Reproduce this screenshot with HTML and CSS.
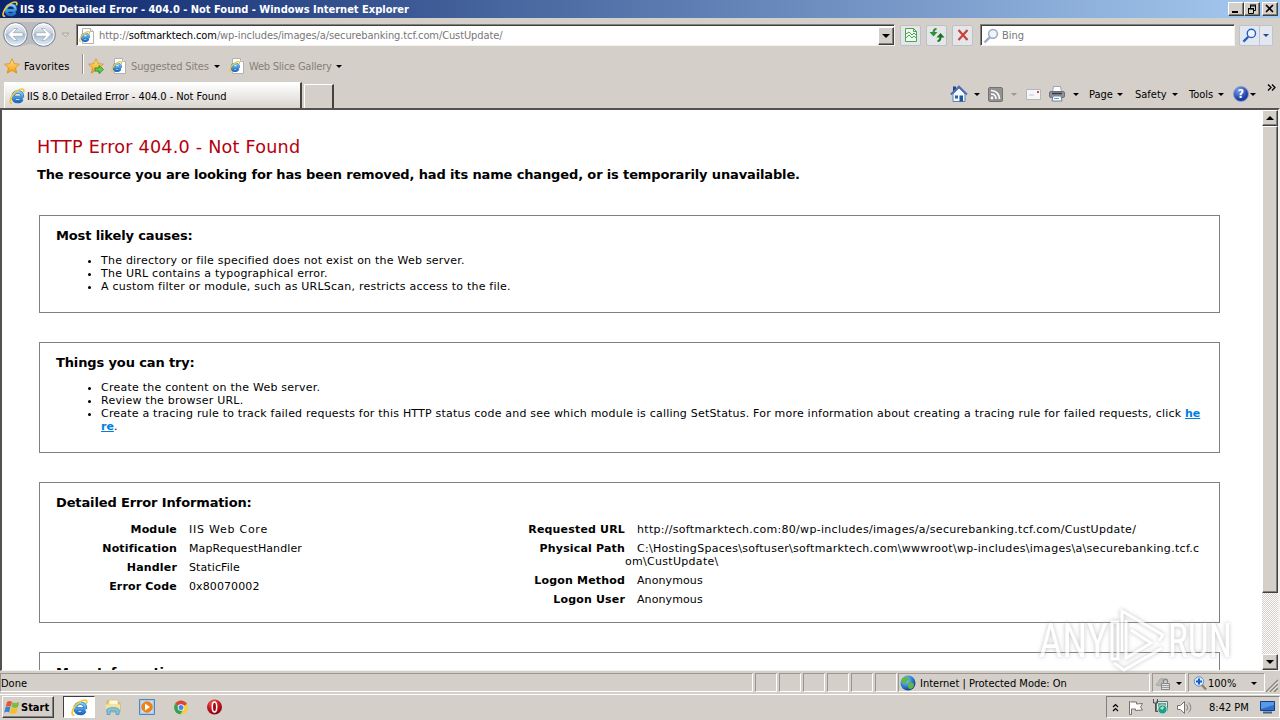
FILE: index.html
```html
<!DOCTYPE html>
<html lang="en">
<head>
    <meta charset="UTF-8">
    <title>IIS 8.0 Detailed Error - 404.0 - Not Found</title>
    <link rel="stylesheet" href="styles.css">
</head>
<body>
<!-- shared icons -->
<svg class="defs" width="0" height="0">
    <defs>
        <linearGradient id="ieBlue" x1="0" y1="0" x2="0" y2="1">
            <stop offset="0" stop-color="#7ccff8"/>
            <stop offset="1" stop-color="#1f6cc8"/>
        </linearGradient>
        <linearGradient id="navBlue" x1="0" y1="0" x2="0" y2="1">
            <stop offset="0" stop-color="#f4f7fb"/>
            <stop offset="0.45" stop-color="#c3cddb"/>
            <stop offset="0.5" stop-color="#a9bad0"/>
            <stop offset="1" stop-color="#e2f3fc"/>
        </linearGradient>
        <linearGradient id="starGold" x1="0" y1="0" x2="0" y2="1">
            <stop offset="0" stop-color="#ffe884"/>
            <stop offset="1" stop-color="#f59a10"/>
        </linearGradient>
        <radialGradient id="globeFill" cx="0.35" cy="0.3" r="0.8">
            <stop offset="0" stop-color="#8ed8ff"/>
            <stop offset="0.6" stop-color="#2676c8"/>
            <stop offset="1" stop-color="#0b2f78"/>
        </radialGradient>
        <radialGradient id="operaRed" cx="0.4" cy="0.25" r="0.8">
            <stop offset="0" stop-color="#f26a6a"/>
            <stop offset="0.5" stop-color="#c81820"/>
            <stop offset="1" stop-color="#7c0008"/>
        </radialGradient>
    </defs>
    <symbol id="ie" viewBox="0 0 16 16">
        <path d="M13.6 9.4H5M13 11.2C12 13.2 10.5 13.7 8.7 13.7 5.8 13.7 4 11.6 4 8.9 4 6.1 6 4 8.8 4 11.7 4 13.6 6 13.6 9.4" fill="none" stroke="#1c5cae" stroke-width="3.3"/>
        <path d="M13.6 9.4H5M13 11.2C12 13.2 10.5 13.7 8.7 13.7 5.8 13.7 4 11.6 4 8.9 4 6.1 6 4 8.8 4 11.7 4 13.6 6 13.6 9.4" fill="none" stroke="url(#ieBlue)" stroke-width="2.5"/>
        <path d="M3.200 15C.2 15.800.4 11.800 3.200 7.600 6.200 3.200 11.500.2 14 1.200 15 1.700 15 3 14.400 4.400" fill="none" stroke="#f0c838" stroke-width="1.7"/>
    </symbol>
    <symbol id="iePage" viewBox="0 0 16 16">
        <path d="M3.500.5h8l3 3v12h-11z" fill="#fff" stroke="#b2b2b2"/>
        <path d="M11.500.5v3h3" fill="#eee" stroke="#b2b2b2"/>
        <g transform="translate(0 3) scale(.72)"><use href="#ie" width="16" height="16"/></g>
    </symbol>
    <symbol id="star" viewBox="0 0 16 16">
        <path d="M8 .8l2.200 4.900 5.200.5-3.900 3.600 1.200 5.300L8 12.400l-4.700 2.700 1.200-5.300L.6 6.200l5.200-.5z" fill="url(#starGold)" stroke="#d98e1c" stroke-width=".8"/>
    </symbol>
    <symbol id="lens" viewBox="0 0 16 16">
        <path d="M6.700 9.300L1.500 14.500" stroke="currentColor" stroke-width="2.4" fill="none"/>
        <circle cx="10" cy="5.800" r="4.400" fill="#eef5fd" stroke="currentColor" stroke-width="1.5"/>
    </symbol>
</svg>

<div class="screen">
    <div class="titlebar">
        <svg class="ico"><use href="#ie"/></svg>
        <span class="title">IIS 8.0 Detailed Error - 404.0 - Not Found - Windows Internet Explorer</span>
        <div class="win-buttons">
            <span class="win-btn"><svg width="12" height="10"><path d="M2 8h6" stroke="#000" stroke-width="2"/></svg></span>
            <span class="win-btn"><svg width="12" height="10"><path d="M4 1h6M4 2h6M4.500 1v3M9.500 1v5.500H8M2 4.500h5M2 5h6M2.500 4v5.500h5V4" fill="none" stroke="#000"/></svg></span>
            <span class="win-btn close"><svg width="12" height="10"><path d="M2 1l7 7M9 1L2 8" stroke="#000" stroke-width="1.6"/></svg></span>
        </div>
    </div>

    <div class="address-row">
        <svg class="nav" width="56" height="28" viewBox="0 0 56 28">
            <path d="M15 1h28c7 0 12 5 12 12s-5 13-12 13c-6 0-9-3-13.500-3S22 26 15 26C8 26 2 21 2 13S8 1 15 1z" fill="#bcbcc0"/>
            <circle cx="14.500" cy="13.500" r="11.800" fill="url(#navBlue)" stroke="#7e8794"/>
            <circle cx="42.500" cy="13.500" r="11.800" fill="url(#navBlue)" stroke="#7e8794"/>
            <circle cx="14.500" cy="13.500" r="10.600" fill="none" stroke="#fff"/>
            <circle cx="42.500" cy="13.500" r="10.600" fill="none" stroke="#fff"/>
            <path d="M7 13.500l6-6h3.500l-4.200 4.200h9.700v3.600h-9.700l4.200 4.200H13z" fill="#fff" stroke="#98a5b6" stroke-width=".7"/>
            <path d="M50 13.500l-6-6h-3.500l4.200 4.200H35v3.600h9.700l-4.200 4.200H44z" fill="#fff" stroke="#98a5b6" stroke-width=".7"/>
        </svg>
        <svg class="nav-more" width="9" height="6"><path d="M1 1h7L4.500 4.800z" fill="#ddd9d3" stroke="#aaa69f"/></svg>
        <div class="field address">
            <svg class="ico"><use href="#iePage"/></svg>
            <span class="url">http://<b>softmarktech.com</b>/wp-includes/images/a/securebanking.tcf.com/CustUpdate/</span>
            <span class="drop"><i class="arrow big"></i></span>
        </div>
        <span class="tool compat"><svg width="14" height="16"><path d="M1.500 1.500h8l3 3v10h-11z" fill="#eefaed" stroke="#4da353"/><path d="M9.500 1.500v3h3M2 7l3-2 3 3 2-2 2 2M2 11l3-3 3 3 2-2 2 2" fill="none" stroke="#4da353"/></svg></span>
        <span class="tool refresh"><svg width="16" height="16"><path d="M7.500 2C5 2 4.500 3.500 4.500 6" fill="none" stroke="#2d9133" stroke-width="2"/><path d="M.5 5h8L4.500 9.500z" fill="#2d9133"/><path d="M8.500 14c2.500 0 3-2 3-4.500" fill="none" stroke="#197321" stroke-width="2"/><path d="M7.500 10.500h8L11.500 6z" fill="#197321"/></svg></span>
        <span class="tool stop"><svg width="14" height="14"><path d="M2.500 2l9 10M11.500 2l-9 10" stroke="#c9413c" stroke-width="2.2"/></svg></span>
        <div class="field search">
            <svg class="ico"><use href="#lens"/></svg>
            <span>Bing</span>
        </div>
        <div class="search-go">
            <span><svg width="15" height="15"><use href="#lens"/></svg></span>
            <span><i class="arrow"></i></span>
        </div>
    </div>

    <div class="favorites-row">
        <svg class="ico"><use href="#star"/></svg>
        <span class="fav-label">Favorites</span>
        <span class="divider"></span>
        <svg class="ico add" viewBox="0 0 16 16"><use href="#star"/><path d="M7 10h4V7.500l4.500 4-4.500 4V13H7z" fill="#5fd04e" stroke="#23892a" stroke-width=".8"/></svg>
        <svg class="ico"><use href="#iePage"/></svg>
        <span class="dim suggested">Suggested Sites</span><i class="arrow"></i>
        <svg class="ico slice"><use href="#iePage"/></svg>
        <span class="dim gallery">Web Slice Gallery</span><i class="arrow"></i>
    </div>

    <div class="tab-row">
        <div class="tab">
            <svg class="ico"><use href="#ie"/></svg>
            <span>IIS 8.0 Detailed Error - 404.0 - Not Found</span>
        </div>
        <div class="new-tab"></div>
        <div class="commands">
            <svg class="home" width="18" height="18" viewBox="0 0 18 18"><path d="M3 1.500h3v5H3z" fill="#2a3c8c"/><path d="M3 9l6-6 6 6v7.500H3z" fill="#f2f8ff" stroke="#5f82b4"/><path d="M.8 9.500L9 1.500l8 8" fill="none" stroke="#4b70b3" stroke-width="1.8"/><path d="M9.500 10.500h3.500v6H9.500z" fill="#24549b"/><path d="M5 10.500h3v3H5z" fill="#355a98"/></svg>
            <i class="arrow"></i>
            <svg class="rss" width="15" height="15"><rect x=".5" y=".5" width="14" height="14" rx="1.500" fill="#929292" stroke="#737373"/><circle cx="4" cy="11" r="1.400" fill="#fff"/><path d="M3 7c3 0 5 2 5 5M3 3.500c5 0 8.500 3.500 8.500 8.500" fill="none" stroke="#fff" stroke-width="1.7"/></svg>
            <i class="arrow faded"></i>
            <svg class="mail" width="15" height="11"><path d="M.5.5h14v10H.5z" fill="#f7f6f7" stroke="#b5b3bb"/><path d="M11 2h2v2h-2z" fill="#c9455a"/><path d="M3 6h5" stroke="#bfc6d4"/></svg>
            <svg class="print" width="17" height="16"><path d="M4.500.5h7l1 5h-9z" fill="#fff" stroke="#9aa3af"/><rect x=".5" y="5.500" width="15" height="6" rx="1.500" fill="#8d929b" stroke="#6a7079"/><path d="M3 7.500h10" stroke="#353a42" stroke-width="1.5"/><path d="M4 10h8l1 5H3z" fill="#fff" stroke="#708095"/><path d="M5 12.500h5" stroke="#50a1dc"/></svg>
            <i class="arrow"></i>
            <span class="cmd-page">Page</span><i class="arrow"></i>
            <span class="cmd-safety">Safety</span><i class="arrow"></i>
            <span class="cmd-tools">Tools</span><i class="arrow"></i>
            <span class="help">?</span><i class="arrow"></i>
            <svg class="chevron" width="9" height="7"><path d="M1 .5l3 3-3 3M5 .5l3 3-3 3" fill="none" stroke="#000" stroke-width="1.3"/></svg>
        </div>
    </div>

    <div class="viewport">
        <div class="page">
            <h2>HTTP Error 404.0 - Not Found</h2>
            <h3>The resource you are looking for has been removed, had its name changed, or is temporarily unavailable.</h3>

            <fieldset class="causes">
                <h4>Most likely causes:</h4>
                <ul>
                    <li>The directory or file specified does not exist on the Web server.</li>
                    <li>The URL contains a typographical error.</li>
                    <li>A custom filter or module, such as URLScan, restricts access to the file.</li>
                </ul>
            </fieldset>

            <fieldset class="try">
                <h4>Things you can try:</h4>
                <ul>
                    <li>Create the content on the Web server.</li>
                    <li>Review the browser URL.</li>
                    <li class="tracing">Create a tracing rule to track failed requests for this HTTP status code and see which module is calling SetStatus. For more information about creating a tracing rule for failed requests, click <a href="#">he<br>re</a>.</li>
                </ul>
            </fieldset>

            <fieldset class="details">
                <h4>Detailed Error Information:</h4>
                <div class="columns">
                    <dl>
                        <dt>Module</dt><dd class="wide">IIS Web Core</dd>
                        <dt>Notification</dt><dd>MapRequestHandler</dd>
                        <dt>Handler</dt><dd>StaticFile</dd>
                        <dt>Error Code</dt><dd>0x80070002</dd>
                    </dl>
                    <dl>
                        <dt>Requested URL</dt><dd class="long">http://softmarktech.com:80/wp-includes/images/a/securebanking.tcf.com/CustUpdate/</dd>
                        <dt>Physical Path</dt><dd class="long">C:\HostingSpaces\softuser\softmarktech.com\wwwroot\wp-includes\images\a\securebanking.tcf.c<br>om\CustUpdate\</dd>
                        <dt>Logon Method</dt><dd>Anonymous</dd>
                        <dt>Logon User</dt><dd>Anonymous</dd>
                    </dl>
                </div>
            </fieldset>

            <fieldset class="more">
                <h4>More Information:</h4>
            </fieldset>
        </div>
        <div class="scrollbar">
            <span class="sb-btn"><i class="arrow big up"></i></span>
            <span class="thumb"></span>
            <span class="track"></span>
            <span class="sb-btn"><i class="arrow big"></i></span>
        </div>
    </div>

    <div class="statusbar">
        <span class="pane done">Done</span>
        <span class="pane small"></span>
        <span class="pane small"></span>
        <span class="pane small"></span>
        <span class="pane small"></span>
        <span class="pane small"></span>
        <span class="pane small"></span>
        <span class="pane zone">
            <svg width="16" height="16"><circle cx="8" cy="8" r="7.500" fill="url(#globeFill)"/><path d="M3 3c3-2 6-1 6 1S6 6 6 8s-3 1-4-1 0-3 1-4zM9 8c3-1 5 0 5 2s-2 4-4 4-3-5-1-6z" fill="#62b83e"/></svg>
            <span>Internet | Protected Mode: On</span>
        </span>
        <span class="pane lock">
            <svg width="16" height="15"><path d="M1 9l4-6 3-1-2 8z" fill="#bbb" stroke="#999" stroke-width=".6"/><path d="M8.500 8V5.500c0-3 4-3 4 0V8" fill="none" stroke="#888" stroke-width="1.3"/><path d="M6.500 7.500h8v6h-8z" fill="#e3e3e3" stroke="#888"/><path d="M7 9.500h7M7 11.500h7" stroke="#999"/></svg>
            <i class="arrow"></i>
        </span>
        <span class="pane zoom">
            <svg width="15" height="15"><path d="M8.500 8.500L13 13.500" stroke="#9b7f60" stroke-width="2.4"/><circle cx="6" cy="5.500" r="4.700" fill="#d9ecff" stroke="#5b8fcc"/><path d="M6 2.500v6M3 5.500h6" stroke="#1c5cb8" stroke-width="2"/></svg>
            <span>100%</span>
            <i class="arrow"></i>
        </span>
        <svg class="grip" width="12" height="13"><path d="M0 13L12 1M4 13L12 5M8 13L12 9" stroke="#878279" stroke-width="1.5"/><path d="M1.500 13L12 2.500M5.500 13L12 6.500" stroke="#fff" stroke-width=".7"/></svg>
    </div>

    <div class="taskbar">
        <span class="start">
            <svg width="16" height="15" viewBox="0 0 16 15"><path d="M3 2c2-1.500 3.500-1.200 5-.2L6.700 6.600C5 5.700 3.500 5.800 1.700 6.900z" fill="#e8552a"/><path d="M8.500 2.200c2 1.200 4 1 6.700-.2L14 7c-2 1.200-4.500 1.200-6.700.1z" fill="#7dbb42"/><path d="M1.400 7.500c1.800-1.200 3.400-1.200 5-.3L5.100 12.500C3.500 11.500 2 11.700.2 12.800z" fill="#3f7fce"/><path d="M7.200 7.800c2 1.100 4.300 1 6.500-.2l-1.200 5.500c-2.200 1.200-4.400 1.200-6.500.1z" fill="#f6bf28"/></svg>
            Start
        </span>
        <span class="task active"><svg width="17" height="17"><use href="#ie"/></svg></span>
        <span class="task explorer"><svg width="17" height="17"><path d="M2 2h5l1 2h7v9H2z" fill="#efd477" stroke="#c7a244" stroke-width=".7"/><path d="M4 1h9v5H4z" fill="#fff8d8" stroke="#c9b577" stroke-width=".6"/><path d="M1 5.500h14v5H1z" fill="#f6e39c"/><path d="M2 15.500v-5c0-2.500 12-2.500 12 0v5h-3V12H5v3.500z" fill="#7cc6ea" stroke="#4794c2" stroke-width=".7"/></svg></span>
        <span class="task player"><svg width="17" height="17"><path d="M.5.5h15v15H.5z" fill="#a7cdec" stroke="#4e85bd"/><path d="M2.500 2.500h11v11h-11z" fill="#d6e9f8"/><circle cx="8" cy="8" r="5.800" fill="#ef8216"/><path d="M6 4.500l5 3.500-5 3.500z" fill="#fff"/></svg></span>
        <span class="task chrome"><svg width="15" height="15"><circle cx="7" cy="7.500" r="6.800" fill="#f9ce32"/><path d="M7 7.500L1 4A7 7 0 0 1 13 4z" fill="#db4537"/><path d="M1 4A7 7 0 0 0 6.500 14.300l2.500-4.800-2-2z" fill="#32a350"/><circle cx="7" cy="7.500" r="3.300" fill="#fff"/><circle cx="7" cy="7.500" r="2.500" fill="#4485ee"/></svg></span>
        <span class="task opera"><svg width="16" height="16"><circle cx="7.500" cy="8" r="7.500" fill="url(#operaRed)"/><ellipse cx="7.500" cy="8" rx="2.200" ry="5" fill="#a20810" stroke="#fff" stroke-width="1.5"/></svg></span>
        <div class="tray">
            <svg class="expand" width="7" height="9"><path d="M1 4l2.500-2.500L6 4M1 8l2.500-2.500L6 8" fill="none" stroke="#000" stroke-width="1.2"/></svg>
            <svg class="flag" width="16" height="15"><path d="M1.500 1v13.500h2V9h4v1.500l7-.5-2-3 2-3.500-6 .5V2h-6" fill="#fff" stroke="#77736c"/></svg>
            <svg class="net" width="16" height="16"><path d="M4.500 2.500h11v9h-11z" fill="#dce9e7" stroke="#66716f"/><path d="M6 4h8v6H6z" fill="#62a9a2"/><path d="M1.500 0v4h4V0M3.500 4v8.500h3" fill="none" stroke="#4d4d4d"/><circle cx="10.500" cy="10.500" r="4.600" fill="#279b88" stroke="#bde8e0"/><path d="M8 9l3-2 1 2-2 2z" fill="#a6e8ae"/></svg>
            <svg class="sound" width="17" height="15"><path d="M1.500 5.500h3l4-4v12l-4-4h-3z" fill="#fff" stroke="#77736c"/><path d="M10.500 4.500c1.500 2 1.500 4 0 6M12.500 2.500c3 3 3 7 0 10" fill="none" stroke="#84807a"/></svg>
            <span class="clock">8:42 PM</span>
            <svg class="desktop" width="15" height="14"><path d="M.5 1.500h14v9H.5z" fill="#2c6fce" stroke="#193e80"/><path d="M1 2h13v3L1 9z" fill="#559be8"/><path d="M3 12.500h9" stroke="#42618e" stroke-width="2"/></svg>
        </div>
    </div>

    <svg class="watermark" width="204" height="70" viewBox="0 0 204 70">
        <g class="mark">
            <text x="5" y="52" textLength="69" lengthAdjust="spacingAndGlyphs">ANY</text>
            <text x="134" y="52" textLength="64" lengthAdjust="spacingAndGlyphs">RUN</text>
            <path d="M78 17h6v37h-6zM88 47V6l41 24-4 6M92 15v38l25-15-20-13M80 58l10 7 38-22"/>
        </g>
    </svg>
</div>
</body>
</html>
```

FILE: styles.css
```css
body {
    margin: 0;
    font-family: 'DejaVu Sans Condensed', 'DejaVu Sans', sans-serif;
    font-stretch: condensed;
    font-size: 11px;
    color: #000;
}

.defs {
    position: absolute;
}

.screen {
    width: 1280px;
    height: 720px;
    position: relative;
    overflow: hidden;
    display: flex;
    flex-direction: column;
    background: #d4cfc8;
    white-space: nowrap;
}

svg {
    display: block;
    flex: none;
}

.ico {
    width: 16px;
    height: 16px;
}

.arrow {
    flex: none;
    border: 3px solid transparent;
    border-top-color: #000;
    border-bottom: 0;
}

.arrow.big {
    border-width: 4px;
    border-bottom: 0;
}

.arrow.up {
    transform: rotate(180deg);
}

.arrow.faded {
    border-top-color: #9b9790;
}

/* title bar */
.titlebar {
    height: 18px;
    flex: none;
    display: flex;
    align-items: center;
    padding: 0 2px;
    background: linear-gradient(90deg, #0a246a, #a6caf0);
    color: #fff;
    font-weight: bold;
}

.title {
    margin-left: 2px;
}

.win-buttons {
    display: flex;
    margin-left: auto;
}

.win-btn,
.sb-btn,
.drop,
.thumb,
.start {
    box-sizing: border-box;
    background: #d4cfc8;
    border: 1px solid;
    border-color: #fff #404040 #404040 #fff;
    box-shadow: inset -1px -1px #808080;
}

.win-btn {
    width: 16px;
    height: 14px;
    padding: 1px;
}

.win-btn.close {
    margin-left: 2px;
}

/* address bar */
.address-row {
    height: 34px;
    flex: none;
    display: flex;
    align-items: center;
}

.nav {
    margin-left: 1px;
}

.nav-more {
    margin-left: 4px;
}

.field {
    box-sizing: border-box;
    height: 22px;
    display: flex;
    align-items: center;
    background: #fff;
    border: 1px solid;
    border-color: #808080 #f4f2ee #f4f2ee #808080;
    box-shadow: inset 1px 1px #404040;
    color: #777;
}

.address {
    width: 819px;
    margin-left: 6px;
    padding: 1px 0 0 2px;
}

.url {
    margin-left: 4px;
    letter-spacing: -0.1px;
}

.url b {
    font-weight: normal;
    color: #000;
}

.drop {
    width: 16px;
    height: 18px;
    margin-left: auto;
    display: flex;
    align-items: center;
    justify-content: center;
}

.tool {
    box-sizing: border-box;
    width: 21px;
    height: 21px;
    margin-left: 5px;
    display: flex;
    align-items: center;
    justify-content: center;
    background: #e5e6e9;
    border: 1px solid #bcc0c8;
    border-radius: 2px;
}

.search {
    width: 255px;
    margin-left: 7px;
    padding: 1px 0 0 2px;
}

.search .ico {
    margin-right: 3px;
    color: #9bacc0;
}

.search-go {
    box-sizing: border-box;
    display: flex;
    width: 34px;
    height: 21px;
    margin-left: 4px;
    border: 1px solid #bcc4d0;
    border-radius: 2px;
    background: #e3e8f0;
    color: #245cc4;
}

.search-go span {
    display: flex;
    align-items: center;
    justify-content: center;
    width: 20px;
}

.search-go span + span {
    width: 12px;
    border-left: 1px solid #bcc4d0;
}

.search-go .arrow {
    border-top-color: #1d4c95;
}

/* favorites bar */
.favorites-row {
    height: 28px;
    flex: none;
    display: flex;
    align-items: center;
    padding-left: 4px;
}

.fav-label {
    width: 47px;
    margin-left: 4px;
    letter-spacing: 0.1px;
}

.divider {
    width: 1px;
    height: 20px;
    margin: 0 4px 4px 11px;
    border-left: 1px solid #918d86;
    background: #fff;
}

.add {
    margin-right: 7px;
}

.dim {
    color: #858179;
    margin-left: 4px;
}

.suggested {
    width: 83px;
    letter-spacing: -0.15px;
}

.gallery {
    width: 87px;
    letter-spacing: -0.22px;
}

.slice {
    margin-left: 9px;
}

/* tabs and command bar */
.tab-row {
    height: 28px;
    flex: none;
    display: flex;
    align-items: flex-end;
    padding-left: 4px;
}

.tab {
    box-sizing: border-box;
    width: 298px;
    height: 26px;
    display: flex;
    align-items: center;
    padding: 1px 0 0 4px;
    background: linear-gradient(#fff, #d9d5cf);
    border-top: 1px solid #fff;
    border-left: 1px solid #fff;
    border-right: 2px solid #45423d;
}

.tab span {
    margin-left: 2px;
    letter-spacing: -0.05px;
}

.new-tab {
    box-sizing: border-box;
    width: 30px;
    height: 24px;
    margin-left: 2px;
    border-top: 1px solid #fff;
    border-left: 1px solid #fff;
    border-right: 2px solid #45423d;
}

.commands {
    flex: 1;
    height: 28px;
    display: flex;
    align-items: center;
    padding-left: 616px;
}

.home + .arrow {
    margin-left: 6px;
}

.rss {
    margin-left: 8px;
}

.rss + .arrow {
    margin-left: 8px;
}

.mail {
    margin-left: 9px;
}

.print {
    margin-left: 8px;
}

.print + .arrow {
    margin-left: 7px;
}

.cmd-page {
    width: 28px;
    margin-left: 10px;
}

.cmd-safety {
    width: 37px;
    margin-left: 12px;
}

.cmd-tools {
    width: 29px;
    margin-left: 11px;
}

.help {
    box-sizing: border-box;
    width: 16px;
    height: 16px;
    margin: 0 1px 0 9px;
    border: 1px solid #8799c9;
    border-radius: 50%;
    background: radial-gradient(circle at 35% 25%, #7ba0ec, #1a3ea5 65%);
    color: #fff;
    font-size: 12px;
    font-weight: bold;
    line-height: 14px;
    text-align: center;
}

.chevron {
    margin: 0 0 14px 11px;
}

/* page area */
.viewport {
    box-sizing: border-box;
    height: 563px;
    flex: none;
    display: flex;
    border: 2px solid;
    border-color: #55524e #f3f1ed #f3f1ed #55524e;
    border-bottom-width: 1px;
    background: #fff;
}

.page {
    box-sizing: border-box;
    width: 1260px;
    overflow: hidden;
    padding: 26px 42px 0 35px;
    font-family: 'DejaVu Sans', sans-serif;
    font-stretch: normal;
    line-height: 13px;
}

.page h2 {
    margin: 0;
    font-size: 17.6px;
    font-weight: normal;
    line-height: 22px;
    letter-spacing: 0.22px;
    color: #b5000e;
}

.page h3 {
    margin: 9px 0 0;
    font-size: 13px;
    line-height: 16px;
    letter-spacing: -0.135px;
}

fieldset {
    box-sizing: border-box;
    width: 1181px;
    min-width: 0;
    margin: 0 0 29px 2px;
    padding: 12px 16px 0;
    border: 1px solid #808080;
}

.causes {
    height: 98px;
    margin-top: 32px;
}

.try {
    height: 111px;
}

.details {
    height: 141px;
}

.more {
    height: 100px;
}

h4 {
    margin: 0;
    font-size: 13px;
    line-height: 16px;
    letter-spacing: -0.13px;
}

ul {
    margin: 10px 0 0;
    padding-left: 45px;
    letter-spacing: 0.23px;
}

.tracing {
    letter-spacing: 0.204px;
}

a {
    color: #007edf;
    font-weight: bold;
    letter-spacing: 0;
}

.columns {
    display: grid;
    grid-template-columns: 448px 1fr;
    margin-top: 12px;
}

dl {
    display: grid;
    grid-template-columns: 121px 1fr;
    align-content: start;
    row-gap: 6px;
    margin: 0;
}

dt {
    font-weight: bold;
    text-align: right;
    letter-spacing: 0.17px;
}

dd {
    margin: 0;
    text-indent: 12px;
    letter-spacing: 0.1px;
}

dd.long {
    letter-spacing: 0.3px;
}

dd.wide {
    letter-spacing: 0.75px;
}

.scrollbar {
    width: 16px;
    flex: none;
    display: flex;
    flex-direction: column;
}

.sb-btn {
    height: 16px;
    display: flex;
    align-items: center;
    justify-content: center;
}

.thumb {
    height: 467px;
}

.track {
    flex: 1;
    background: repeating-conic-gradient(#fff 0 25%, #d4cfc8 0 50%) 0 0 / 2px 2px;
}

/* status bar */
.statusbar {
    height: 23px;
    flex: none;
    display: flex;
    align-items: center;
    gap: 2px;
}

.pane {
    box-sizing: border-box;
    height: 19px;
    display: flex;
    align-items: center;
    padding-top: 1px;
    border: 1px solid;
    border-color: #9b978f #fff #fff #9b978f;
}

.done {
    width: 753px;
}

.small {
    width: 22px;
}

.zone {
    width: 252px;
    margin-left: -1px;
    padding-left: 1px;
    gap: 4px;
}

.lock {
    width: 34px;
    padding-left: 2px;
    gap: 5px;
}

.zoom {
    width: 77px;
    padding-left: 4px;
}

.zoom .arrow {
    margin-left: 15px;
}

.grip {
    margin: 6px 0 0 -1px;
}

/* taskbar */
.taskbar {
    flex: 1;
    display: flex;
    align-items: center;
    padding-bottom: 1px;
    border-top: 1px solid #fff;
}

.start {
    width: 52px;
    height: 22px;
    margin-left: 2px;
    padding-left: 1px;
    display: flex;
    align-items: center;
    gap: 1px;
    font-weight: bold;
}

.task {
    display: flex;
    align-items: center;
    justify-content: center;
    width: 34px;
}

.active {
    box-sizing: border-box;
    width: 32px;
    height: 22px;
    margin-left: 9px;
    background: #fff;
    border: 1px solid;
    border-color: #404040 #fff #fff #404040;
}

.explorer {
    margin-left: 1px;
}

.tray {
    box-sizing: border-box;
    width: 174px;
    height: 22px;
    margin-left: auto;
    display: flex;
    align-items: center;
    padding-left: 5px;
    border: 1px solid;
    border-color: #808080 #fff #fff #808080;
}

.flag {
    margin-left: 9px;
}

.net {
    margin-left: 8px;
}

.sound {
    margin-left: 8px;
}

.clock {
    width: 40px;
    margin-left: 16px;
}

.desktop {
    margin-left: 11px;
}

/* logo laid over the page */
.watermark {
    position: absolute;
    left: 1034px;
    top: 605px;
}

.mark {
    font-family: Roboto, sans-serif;
    font-size: 48px;
    font-weight: 400;
    fill: #fff;
    opacity: 0.75;
    filter: drop-shadow(0 0 2px #aaa);
}

.mark path {
    fill: none;
    stroke: #fff;
    stroke-width: 3;
}
```
